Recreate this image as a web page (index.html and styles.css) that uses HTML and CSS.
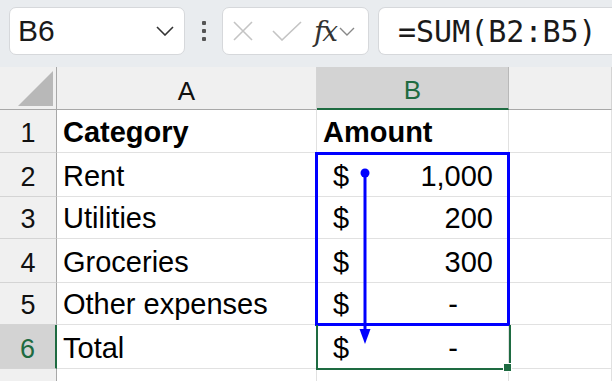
FILE: index.html
```html
<!DOCTYPE html>
<html lang="en">

<head>
    <meta charset="UTF-8">
    <meta name="viewport" content="width=device-width, initial-scale=1.0">
    <title>Budget Sheet</title>
    <link rel="stylesheet" href="styles.css">
</head>

<body>
    <div class="toolbar">
        <div class="name-box">
            <span>B6</span>
            <svg class="chev" width="18" height="10" viewBox="0 0 18 10"><path d="M1 1 L9 9 L17 1" fill="none" stroke="#333" stroke-width="1.6"/></svg>
        </div>
        <div class="dots"><i></i><i></i><i></i></div>
        <div class="fx-buttons">
            <svg width="20" height="20" viewBox="0 0 20 20"><path d="M1 1 L19 19 M19 1 L1 19" stroke="#c4c4c4" stroke-width="1.6"/></svg>
            <svg width="30" height="20" viewBox="0 0 30 20"><path d="M1 10 L10 19 L29 1" fill="none" stroke="#c4c4c4" stroke-width="1.6"/></svg>
            <span class="fx">fx</span>
            <svg width="16" height="9" viewBox="0 0 16 9"><path d="M1 1 L8 8 L15 1" fill="none" stroke="#888" stroke-width="1.4"/></svg>
        </div>
        <div class="formula">=SUM(B2:B5)</div>
    </div>

    <div class="sheet">
        <div class="grid">
            <div class="corner"><div class="tri"></div></div>
            <div class="col-head">A</div>
            <div class="col-head active">B</div>
            <div class="col-head"></div>

            <div class="row-head">1</div>
            <div class="cell bold">Category</div>
            <div class="cell bold">Amount</div>
            <div class="cell"></div>

            <div class="row-head">2</div>
            <div class="cell">Rent</div>
            <div class="cell money"><span>$</span><span>1,000</span></div>
            <div class="cell"></div>

            <div class="row-head">3</div>
            <div class="cell">Utilities</div>
            <div class="cell money"><span>$</span><span>200</span></div>
            <div class="cell"></div>

            <div class="row-head">4</div>
            <div class="cell">Groceries</div>
            <div class="cell money"><span>$</span><span>300</span></div>
            <div class="cell"></div>

            <div class="row-head">5</div>
            <div class="cell">Other expenses</div>
            <div class="cell money"><span>$</span><span class="dash">-</span></div>
            <div class="cell"></div>

            <div class="row-head active">6</div>
            <div class="cell">Total</div>
            <div class="cell money"><span>$</span><span class="dash">-</span></div>
            <div class="cell"></div>

            <div class="row-head"></div>
            <div class="cell"></div>
            <div class="cell"></div>
            <div class="cell"></div>
        </div>

        <!-- overlays: reference range, fill arrow, active cell -->
        <div class="ref-box"></div>
        <div class="active-box"><div class="handle"></div></div>
        <svg class="arrow" width="20" height="180" viewBox="0 0 20 180">
            <circle cx="10" cy="5" r="4.5" fill="#0000ff"/>
            <line x1="10" y1="5" x2="10" y2="162" stroke="#0000ff" stroke-width="3"/>
            <polygon points="4.5,161 15.5,161 10,176" fill="#0000ff"/>
        </svg>
    </div>
</body>

</html>
```

FILE: styles.css
```css
body {
    margin: 0;
    width: 612px;
    height: 381px;
    overflow: hidden;
    background: #ffffff;
    font-family: 'Liberation Sans', Arial, sans-serif;
    color: #000;
}

.toolbar {
    height: 67px;
    box-sizing: border-box;
    padding: 7px 0 12px 9px;
    background: #e9ecef;
    display: flex;
    align-items: stretch;
    white-space: nowrap;
}

.name-box {
    width: 176px;
    box-sizing: border-box;
    background: #fff;
    border: 1px solid #d6d8db;
    border-radius: 7px;
    display: flex;
    align-items: center;
    justify-content: space-between;
    padding: 0 10px 0 8px;
    font-size: 30px;
    color: #1a1a1a;
}

.dots {
    width: 37px;
    display: flex;
    flex-direction: column;
    align-items: center;
    justify-content: center;
    gap: 4px;
}

.dots i {
    width: 4px;
    height: 4px;
    background: #555;
    border-radius: 1px;
}

.fx-buttons {
    width: 147px;
    box-sizing: border-box;
    background: #fff;
    border: 1px solid #d6d8db;
    border-radius: 7px;
    display: flex;
    align-items: center;
    padding: 0 4px 0 10px;
}

.fx-buttons svg:nth-child(2) {
    margin-left: 19px;
}

.fx {
    font-family: 'DejaVu Serif', 'Liberation Serif', serif;
    font-style: italic;
    font-size: 28px;
    color: #333;
    margin-left: 12px;
    margin-right: 3px;
    letter-spacing: -2px;
}

.formula {
    flex: 1;
    margin-left: 9px;
    background: #fff;
    border: 1px solid #d6d8db;
    border-right: none;
    border-radius: 7px 0 0 7px;
    display: flex;
    align-items: center;
    padding-left: 19px;
    font-family: 'DejaVu Sans Mono', 'Liberation Mono', monospace;
    font-size: 30px;
    color: #1a1a1a;
}

.sheet {
    position: relative;
}

.grid {
    display: grid;
    grid-template-columns: 57px 260px 192px 1fr;
    grid-template-rows: 43px 43px 44px 42px 44px 42px 44px 30px;
}

.corner {
    background: #f0f0f0;
    border-right: 1px solid #a8a8a8;
    border-bottom: 1px solid #a8a8a8;
    position: relative;
}

.tri {
    position: absolute;
    right: 3px;
    bottom: 3px;
    width: 35px;
    height: 35px;
    background: #b8b8b8;
    clip-path: polygon(100% 0, 100% 100%, 0 100%);
}

.col-head {
    background: #f0f0f0;
    border-right: 1px solid #d4d4d4;
    border-bottom: 1px solid #a8a8a8;
    display: flex;
    align-items: flex-end;
    justify-content: center;
    padding-bottom: 3px;
    font-size: 26px;
    line-height: 29px;
    color: #111;
}

.col-head.active {
    background: #d3d3d3;
    color: #1e6b41;
    border-bottom: 2px solid #1e6b41;
    border-right-color: #b8b8b8;
}

.row-head {
    background: #f0f0f0;
    border-right: 1px solid #a8a8a8;
    border-bottom: 1px solid #d4d4d4;
    display: flex;
    align-items: flex-end;
    justify-content: center;
    padding-bottom: 4px;
    font-size: 27px;
    line-height: 30px;
    color: #111;
}

.row-head.active {
    background: #d3d3d3;
    color: #1e6b41;
    border-right: 2px solid #1e6b41;
}

.cell {
    border-right: 1px solid #e1e1e1;
    border-bottom: 1px solid #e1e1e1;
    display: flex;
    align-items: flex-end;
    padding: 0 6px 4px 6px;
    font-size: 29px;
    line-height: 32px;
    overflow: hidden;
    white-space: nowrap;
}

.bold {
    font-weight: bold;
}

.money {
    justify-content: space-between;
    padding: 0 15px 4px 16px;
}

.dash {
    padding-right: 35px;
}

.ref-box {
    position: absolute;
    left: 315px;
    top: 85px;
    width: 195px;
    height: 174px;
    box-sizing: border-box;
    border: 3px solid #0000ff;
}

.active-box {
    position: absolute;
    left: 316px;
    top: 258px;
    width: 195px;
    height: 45px;
    box-sizing: border-box;
    border: 2px solid #1e6b41;
    border-top: none;
}

.handle {
    position: absolute;
    right: -3px;
    bottom: -4px;
    width: 7px;
    height: 7px;
    background: #1e6b41;
    border: 1px solid #fff;
}

.arrow {
    position: absolute;
    left: 355px;
    top: 101px;
}
```
